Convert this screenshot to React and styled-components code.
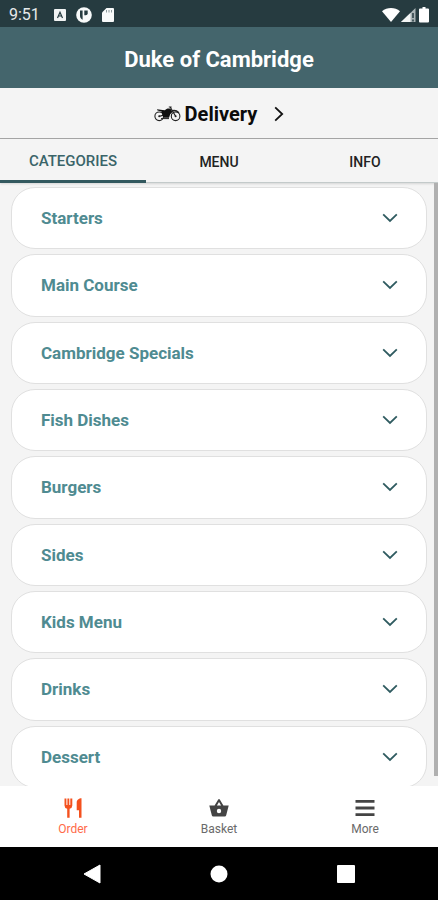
import React from "react";
import styled, { createGlobalStyle } from "styled-components";

const GlobalStyle = createGlobalStyle`
  * {
    box-sizing: border-box;
  }
  body {
    margin: 0;
    font-family: Roboto, "Liberation Sans", sans-serif;
    background-color: #f4f4f4;
  }
  button {
    font-family: inherit;
    border: none;
    padding: 0;
    background: none;
    cursor: pointer;
  }
`;

const Screen = styled.div`
  display: flex;
  flex-direction: column;
  height: 100vh;
`;

const StatusBar = styled.div`
  display: flex;
  align-items: center;
  justify-content: space-between;
  height: 27px;
  flex-shrink: 0;
  padding: 2px 7px 0 9px;
  background-color: #263b40;
  color: #e6eaeb;
  font-size: 16px;
`;

const StatusGroup = styled.div`
  display: flex;
  align-items: center;
  gap: ${({ $gap }) => $gap}px;

  svg {
    display: block;
  }
`;

const Clock = styled.span`
  margin-right: 4px;
`;

const Header = styled.header`
  display: flex;
  justify-content: center;
  align-items: center;
  height: 61px;
  flex-shrink: 0;
  padding-top: 3px;
  background-color: #44656c;
  color: #fff;
`;

const Title = styled.h1`
  margin: 0;
  font-size: 22px;
  font-weight: 700;
`;

const DeliveryButton = styled.button`
  display: flex;
  justify-content: center;
  align-items: center;
  height: 51px;
  flex-shrink: 0;
  padding-top: 2px;
  border-bottom: 1px solid #a6a6a6;
  color: #0c0c0c;
  font-size: 20px;
  font-weight: 700;

  span {
    margin: 0 17px 0 4px;
  }
`;

const Tabs = styled.nav`
  display: flex;
  height: 44px;
  flex-shrink: 0;
  border-bottom: 1px solid #c3caca;
  box-shadow: 0 1px 2px rgba(0, 0, 0, 0.12);
`;

const Tab = styled.button`
  flex: 1;
  height: 44px;
  padding-top: 2px;
  font-size: ${({ $active }) => ($active ? 15 : 14)}px;
  font-weight: 500;
  color: ${({ $active }) => ($active ? "#3a6469" : "#222")};
  border-bottom: ${({ $active }) => ($active ? "3px solid #33595f" : "none")};
`;

const ListArea = styled.main`
  position: relative;
  flex: 1;
  min-height: 0;
`;

const ScrollBox = styled.div`
  height: 100%;
  overflow-y: auto;
  scrollbar-width: none;
`;

const CategoryList = styled.ul`
  display: grid;
  grid-auto-rows: minmax(61px, 1fr);
  gap: 5px;
  min-height: calc(100% + 2px);
  margin: 0;
  padding: 4px 11px 0;
  list-style: none;
`;

const CategoryItem = styled.li`
  display: flex;
`;

const CategoryCard = styled.button`
  flex: 1;
  display: flex;
  justify-content: space-between;
  align-items: center;
  padding: 0 28px 0 29px;
  background-color: #fff;
  border: 1px solid #e0e0e0;
  border-radius: 24px;
  color: #4f8b91;
  font-size: 17px;
  font-weight: 700;
`;

const ScrollThumb = styled.div`
  position: absolute;
  top: 0;
  right: 0;
  bottom: 10px;
  width: 4px;
  background-color: #b0b0b0;
`;

const BottomNav = styled.nav`
  display: flex;
  height: 61px;
  flex-shrink: 0;
  background-color: #fff;
`;

const NavButton = styled.button`
  flex: 1;
  display: flex;
  flex-direction: column;
  align-items: center;
  padding-top: 11px;
  gap: 2px;
  font-size: 12px;
  line-height: 16px;
  color: ${({ $active }) => ($active ? "#ff6a48" : "#6a6a6a")};

  svg {
    color: ${({ $active }) => ($active ? "#f4511e" : "#444")};
  }
`;

const SystemBar = styled.div`
  display: flex;
  height: 53px;
  flex-shrink: 0;
  padding: 0 29px;
  background-color: #000;
`;

const SystemButton = styled.button`
  flex: 1;
  display: flex;
  justify-content: center;
  align-items: center;
`;

const Chevron = () => (
  <svg width="16" height="10" viewBox="0 0 16 10" fill="none" stroke="#2f5b60" strokeWidth="1.8">
    <path d="M1.2 1.4 8 8l6.8-6.6" />
  </svg>
);

const ArrowRight = () => (
  <svg width="10" height="16" viewBox="0 0 10 16" fill="none" stroke="#111" strokeWidth="1.8">
    <path d="M1.2 1.4 8.2 8 1.2 14.600" />
  </svg>
);

const MotorbikeIcon = () => (
  <svg width="27" height="16" viewBox="0 0 27 16" fill="none" stroke="#222">
    <circle cx="5.2" cy="10.300" r="4.300" strokeWidth="1.100" />
    <circle cx="21.600" cy="10.300" r="4.300" strokeWidth="1.100" />
    <circle cx="5.200" cy="10.300" r="1" fill="#222" stroke="none" />
    <circle cx="21.600" cy="10.300" r="1" fill="#222" stroke="none" />
    <path d="M5.200 10.300 10 9M16.300 1.200l5.300 9.100M14.800 1h2.800" strokeWidth="1.200" />
    <path d="M17 5.500c2.500-1.600 5.500-1 8 1.200" strokeWidth="1.300" />
    <path
      d="M3 3.200l5.500.8 2.500.2c1.200-1.500 3.500-2 5.700-1.200l1.500 3.200-2 2-1.200 3.500H9.500L8.200 8.500 7.500 5.600 3.500 4.500z"
      fill="#111"
      stroke="none"
    />
    <path d="M7 12.600h8" strokeWidth="1" />
  </svg>
);

const UtensilsIcon = () => (
  <svg width="22" height="22" viewBox="0 0 22 22" fill="currentColor">
    <path d="M2.500 1.500h1.900V8h1V1.500h1.900V8h1V1.500h2V8.500a3.300 3.300 0 0 1-2.700 3.200v9H5.200v-9A3.300 3.300 0 0 1 2.500 8.500z" />
    <path d="M19.500 1.300v19.400H17v-7.500h-2.300V5.500c0-2.400 2.200-4.200 4.800-4.200z" />
  </svg>
);

const BasketIcon = () => (
  <svg width="22" height="22" viewBox="0 0 22 22" fill="currentColor">
    <path
      d="M15.400 8.600 11.800 2.600a1 1 0 0 0-1.600 0L6.600 8.600H1.300l2.500 9.600a1.600 1.600 0 0 0 1.600 1.300h11.200a1.600 1.600 0 0 0 1.600-1.300l2.500-9.600zm-6.500 0L11 5l2.100 3.600zM11 16.200a2.200 2.200 0 1 1 0-4.400 2.200 2.200 0 0 1 0 4.400z"
      fillRule="evenodd"
    />
  </svg>
);

const MenuIcon = () => (
  <svg width="22" height="22" viewBox="0 0 22 22" fill="currentColor">
    <path d="M1.500 3h19v2.800h-19zM1.500 9.600h19v2.800h-19zM1.500 16.200h19V19h-19z" />
  </svg>
);

const categories = [
  "Starters",
  "Main Course",
  "Cambridge Specials",
  "Fish Dishes",
  "Burgers",
  "Sides",
  "Kids Menu",
  "Drinks",
  "Dessert",
];

const Status = () => (
  <StatusBar>
    <StatusGroup $gap={10}>
      <Clock>9:51</Clock>
      <svg width="12" height="12" viewBox="0 0 12 12">
        <rect width="12" height="12" rx="1" fill="#f2f4f4" />
        <path d="M3.500 9 6 3.300 8.500 9M4.500 7h3" fill="none" stroke="#263b40" strokeWidth="1.200" />
      </svg>
      <svg width="16" height="16" viewBox="0 0 16 16">
        <circle cx="8" cy="8" r="7.800" fill="#f8fafa" />
        <path d="M4 3.600h2.600v9.200C4.800 12 4 10.500 4 8.500z" fill="#263b40" />
        <path d="M8.300 3.600h3.400v2.600a2 2 0 0 1-2 2H8.300z" fill="#263b40" />
      </svg>
      <svg width="12" height="14" viewBox="0 0 12 14">
        <path d="M4.500 0H11a1 1 0 0 1 1 1v12a1 1 0 0 1-1 1H1a1 1 0 0 1-1-1V4.500z" fill="#f8fafa" />
        <path d="M4.500 2v2.500M7 2v2.500M9.500 2v2.500" stroke="#8d9a9d" strokeWidth="1" />
      </svg>
    </StatusGroup>
    <StatusGroup $gap={1}>
      <svg width="18" height="14" viewBox="0 0 18 14">
        <path d="M9 14 0 3.300C5-1 13-1 18 3.300z" fill="#fff" />
      </svg>
      <svg width="15" height="14" viewBox="0 0 15 14">
        <path d="M14.500 0v14H0z" fill="#a9b3b5" />
        <path d="M9.500 5v9H0z" fill="#f4f6f6" />
        <path d="M12 5v5M12 11.500v2" stroke="#263b40" strokeWidth="1.500" />
      </svg>
      <svg width="14" height="16" viewBox="0 0 14 16">
        <path d="M3 1.500h2.500V0h3v1.500H11a1 1 0 0 1 1 1v12a1 1 0 0 1-1 1H3a1 1 0 0 1-1-1v-12a1 1 0 0 1 1-1z" fill="#fff" />
      </svg>
    </StatusGroup>
  </StatusBar>
);

const App = () => {
  return (
    <>
      <GlobalStyle />
      <Screen>
        <Status />
        <Header>
          <Title>Duke of Cambridge</Title>
        </Header>
        <DeliveryButton>
          <MotorbikeIcon />
          <span>Delivery</span>
          <ArrowRight />
        </DeliveryButton>
        <Tabs>
          <Tab $active>CATEGORIES</Tab>
          <Tab>MENU</Tab>
          <Tab>INFO</Tab>
        </Tabs>
        <ListArea>
          <ScrollBox>
            <CategoryList>
              {categories.map((name) => (
                <CategoryItem key={name}>
                  <CategoryCard>
                    {name}
                    <Chevron />
                  </CategoryCard>
                </CategoryItem>
              ))}
            </CategoryList>
          </ScrollBox>
          <ScrollThumb />
        </ListArea>
        <BottomNav>
          <NavButton $active>
            <UtensilsIcon />
            Order
          </NavButton>
          <NavButton>
            <BasketIcon />
            Basket
          </NavButton>
          <NavButton>
            <MenuIcon />
            More
          </NavButton>
        </BottomNav>
        <SystemBar>
          <SystemButton aria-label="Back">
            <svg width="18" height="20" viewBox="0 0 18 20" fill="#fff">
              <path d="M17 1v18L1 10z" stroke="#fff" strokeLinejoin="round" />
            </svg>
          </SystemButton>
          <SystemButton aria-label="Home">
            <svg width="18" height="18" viewBox="0 0 18 18" fill="#fff">
              <circle cx="9" cy="9" r="8.500" />
            </svg>
          </SystemButton>
          <SystemButton aria-label="Recent apps">
            <svg width="18" height="18" viewBox="0 0 18 18" fill="#fff">
              <rect width="18" height="18" rx="1" />
            </svg>
          </SystemButton>
        </SystemBar>
      </Screen>
    </>
  );
};

export default App;
